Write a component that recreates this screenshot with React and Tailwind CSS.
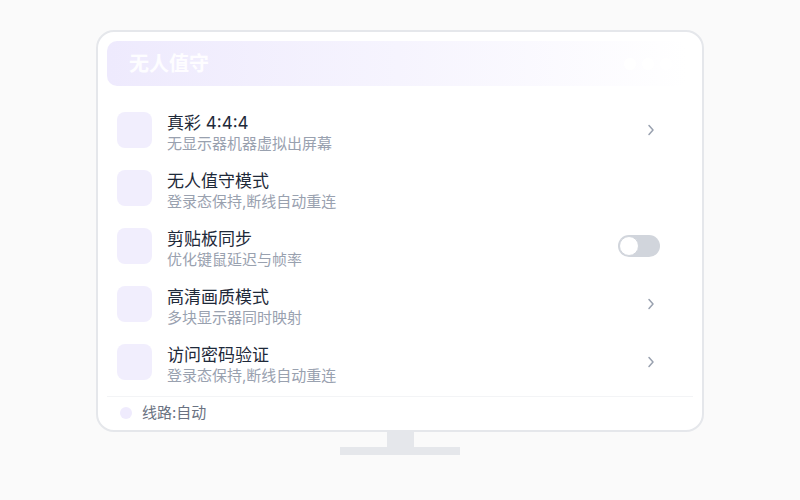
import React, { useState } from 'react';

const rows = [
  { id: 1, title: '真彩 4:4:4', desc: '无显示器机器虚拟出屏幕', action: 'chevron' },
  { id: 2, title: '无人值守模式', desc: '登录态保持,断线自动重连', action: null },
  { id: 3, title: '剪贴板同步', desc: '优化键鼠延迟与帧率', action: 'toggle' },
  { id: 4, title: '高清画质模式', desc: '多块显示器同时映射', action: 'chevron' },
  { id: 5, title: '访问密码验证', desc: '登录态保持,断线自动重连', action: 'chevron' },
];

const Chevron = () => (
  <svg width="8" height="12" viewBox="0 0 8 12" fill="none" className="text-gray-400 mr-[5px]">
    <path d="M2 1.5 L6 6 L2 10.5" stroke="currentColor" strokeWidth="1.5" strokeLinecap="round" strokeLinejoin="round" />
  </svg>
);

const Toggle = ({ on, onChange }) => (
  <button
    onClick={onChange}
    className={`w-[42px] h-[22px] rounded-full p-[1px] flex items-center transition-colors ${on ? 'bg-violet-400 justify-end' : 'bg-gray-300 justify-start'}`}
  >
    <span className="w-[20px] h-[20px] rounded-full bg-white border border-gray-300" />
  </button>
);

const SettingRow = ({ row, on, onToggle }) => (
  <div className="h-[58px] shrink-0 flex items-center pl-[10px] pr-[33px]">
    <div className="w-[35px] h-[36px] rounded-lg bg-[#f1eefd] shrink-0" />
    <div className="ml-[15px] pt-[6px] flex-1 min-w-0">
      <div className="text-[17px] leading-[22px] text-gray-800">{row.title}</div>
      <div className="text-[15px] leading-[20px] text-gray-400">{row.desc}</div>
    </div>
    {row.action === 'chevron' && <Chevron />}
    {row.action === 'toggle' && <Toggle on={on} onChange={onToggle} />}
  </div>
);

export default function App() {
  const [clipSync, setClipSync] = useState(false);

  return (
    <div
      className="w-[800px] h-[500px] bg-[#fafafa] flex flex-col items-center pt-[30px]"
      style={{ fontFamily: 'Inter, "Noto Sans CJK SC", sans-serif' }}
    >
      {/* Monitor screen */}
      <div className="w-[608px] h-[402px] shrink-0 bg-white border-2 border-gray-200 rounded-[18px] pt-[9px] px-[9px] flex flex-col">
        <div className="h-[45px] shrink-0 rounded-[10px] bg-linear-to-r from-[#eeeafd] via-[#f6f4fe] to-white/0 flex items-center justify-between pl-[22px] pr-[15px] mr-[6px]">
          <span className="text-[20px] font-bold text-white/90">无人值守</span>
          <div className="flex gap-[6px]">
            <span className="w-[12px] h-[12px] rounded-full bg-white" />
            <span className="w-[12px] h-[12px] rounded-full bg-white" />
            <span className="w-[12px] h-[12px] rounded-full bg-white" />
          </div>
        </div>

        <div className="mt-[15px] flex flex-col shrink-0">
          {rows.map((row) => (
            <SettingRow key={row.id} row={row} on={clipSync} onToggle={() => setClipSync(!clipSync)} />
          ))}
        </div>

        <div className="mt-[5px] shrink-0 border-t border-gray-100 flex items-center h-[33px] pl-[13px]">
          <span className="w-[12px] h-[12px] rounded-full bg-[#efebfd]" />
          <span className="ml-[10px] text-[15px] text-gray-500">线路:自动</span>
        </div>
      </div>

      {/* Stand */}
      <div className="w-[27px] h-[15px] bg-gray-200" />
      <div className="w-[120px] h-[8px] bg-gray-200" />
    </div>
  );
}
